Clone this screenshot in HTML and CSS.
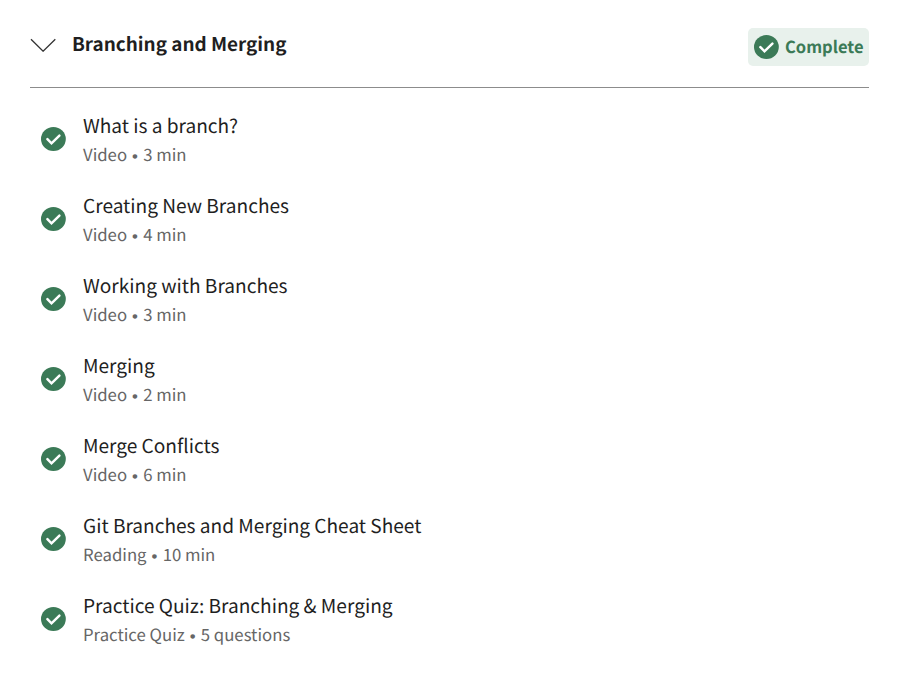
FILE: index.html
```html
<!DOCTYPE html>
<html lang="en">
<head>
<meta charset="utf-8">
<title>Branching and Merging</title>
<link rel="stylesheet" href="styles.css">
</head>
<body>
<svg width="0" height="0" class="defs"><symbol id="check" viewBox="0 0 26 26"><ellipse cx="13.4" cy="13" rx="12.4" ry="12" fill="#3b7a57"/><path d="M7.4 13.2l4.1 4.1 7.9-7.7" fill="none" stroke="#fff" stroke-width="2.5" stroke-linecap="round"/></symbol></svg>
<main class="module">
<header class="module-header">
<svg class="chevron" viewBox="0 0 26 14"><path d="M1 1.2L13.1 13.2 25.3 1.2" fill="none" stroke="#333" stroke-width="1.3"/></svg>
<h2 class="module-title">Branching and Merging</h2>
<div class="status"><svg class="icon"><use href="#check"/></svg><span class="status-text">Complete</span></div>
</header>
<ul class="items">
<li class="item"><svg class="icon"><use href="#check"/></svg><div><div class="name">What is a branch?</div><div class="meta">Video<span class="dot">•</span>3 min</div></div></li>
<li class="item"><svg class="icon"><use href="#check"/></svg><div><div class="name">Creating New Branches</div><div class="meta">Video<span class="dot">•</span>4 min</div></div></li>
<li class="item"><svg class="icon"><use href="#check"/></svg><div><div class="name">Working with Branches</div><div class="meta">Video<span class="dot">•</span>3 min</div></div></li>
<li class="item"><svg class="icon"><use href="#check"/></svg><div><div class="name">Merging</div><div class="meta">Video<span class="dot">•</span>2 min</div></div></li>
<li class="item"><svg class="icon"><use href="#check"/></svg><div><div class="name">Merge Conflicts</div><div class="meta">Video<span class="dot">•</span>6 min</div></div></li>
<li class="item"><svg class="icon"><use href="#check"/></svg><div><div class="name">Git Branches and Merging Cheat Sheet</div><div class="meta">Reading<span class="dot">•</span>10 min</div></div></li>
<li class="item"><svg class="icon"><use href="#check"/></svg><div><div class="name">Practice Quiz: Branching &amp; Merging</div><div class="meta">Practice Quiz<span class="dot">•</span>5 questions</div></div></li>
</ul>
</main>
</body>
</html>
```
FILE: styles.css
```css
* { box-sizing: border-box; }
body { margin: 0; background: #fff; color: #1f1f1f; font-family: "Noto Sans CJK SC", sans-serif; text-rendering: geometricPrecision; }
.defs { display: block; height: 0; }
.module { padding: 28px 37px 0 30px; }
.module-header { display: flex; align-items: flex-start; height: 60px; border-bottom: 1px solid #8c8c8c; }
.chevron { width: 26px; height: 14px; margin-top: 10px; }
.module-title { margin: 0 auto 0 16px; font-size: 18.9px; line-height: 31px; font-weight: 700; }
.status { display: flex; align-items: center; gap: 6px; width: 121px; height: 38px; padding-left: 5px; border-radius: 5px; background: #e8f1ec; color: #3b7a57; font-size: 16.5px; font-weight: 700; }
.status-text { line-height: 24px; padding-bottom: 2px; }
.icon { width: 26px; height: 26px; flex: none; }
.items { list-style: none; margin: 0; padding: 23px 0 0 10px; }
.item { display: flex; height: 80px; gap: 17px; }
.item .icon { margin-top: 15px; }
.name { font-size: 19.1px; line-height: 29px; }
.meta { font-size: 16.75px; line-height: 28px; color: #666; }
.dot { margin: 0 5.2px 0 5px; font-family: "Liberation Sans", sans-serif; line-height: 1; vertical-align: -1px; }
```
